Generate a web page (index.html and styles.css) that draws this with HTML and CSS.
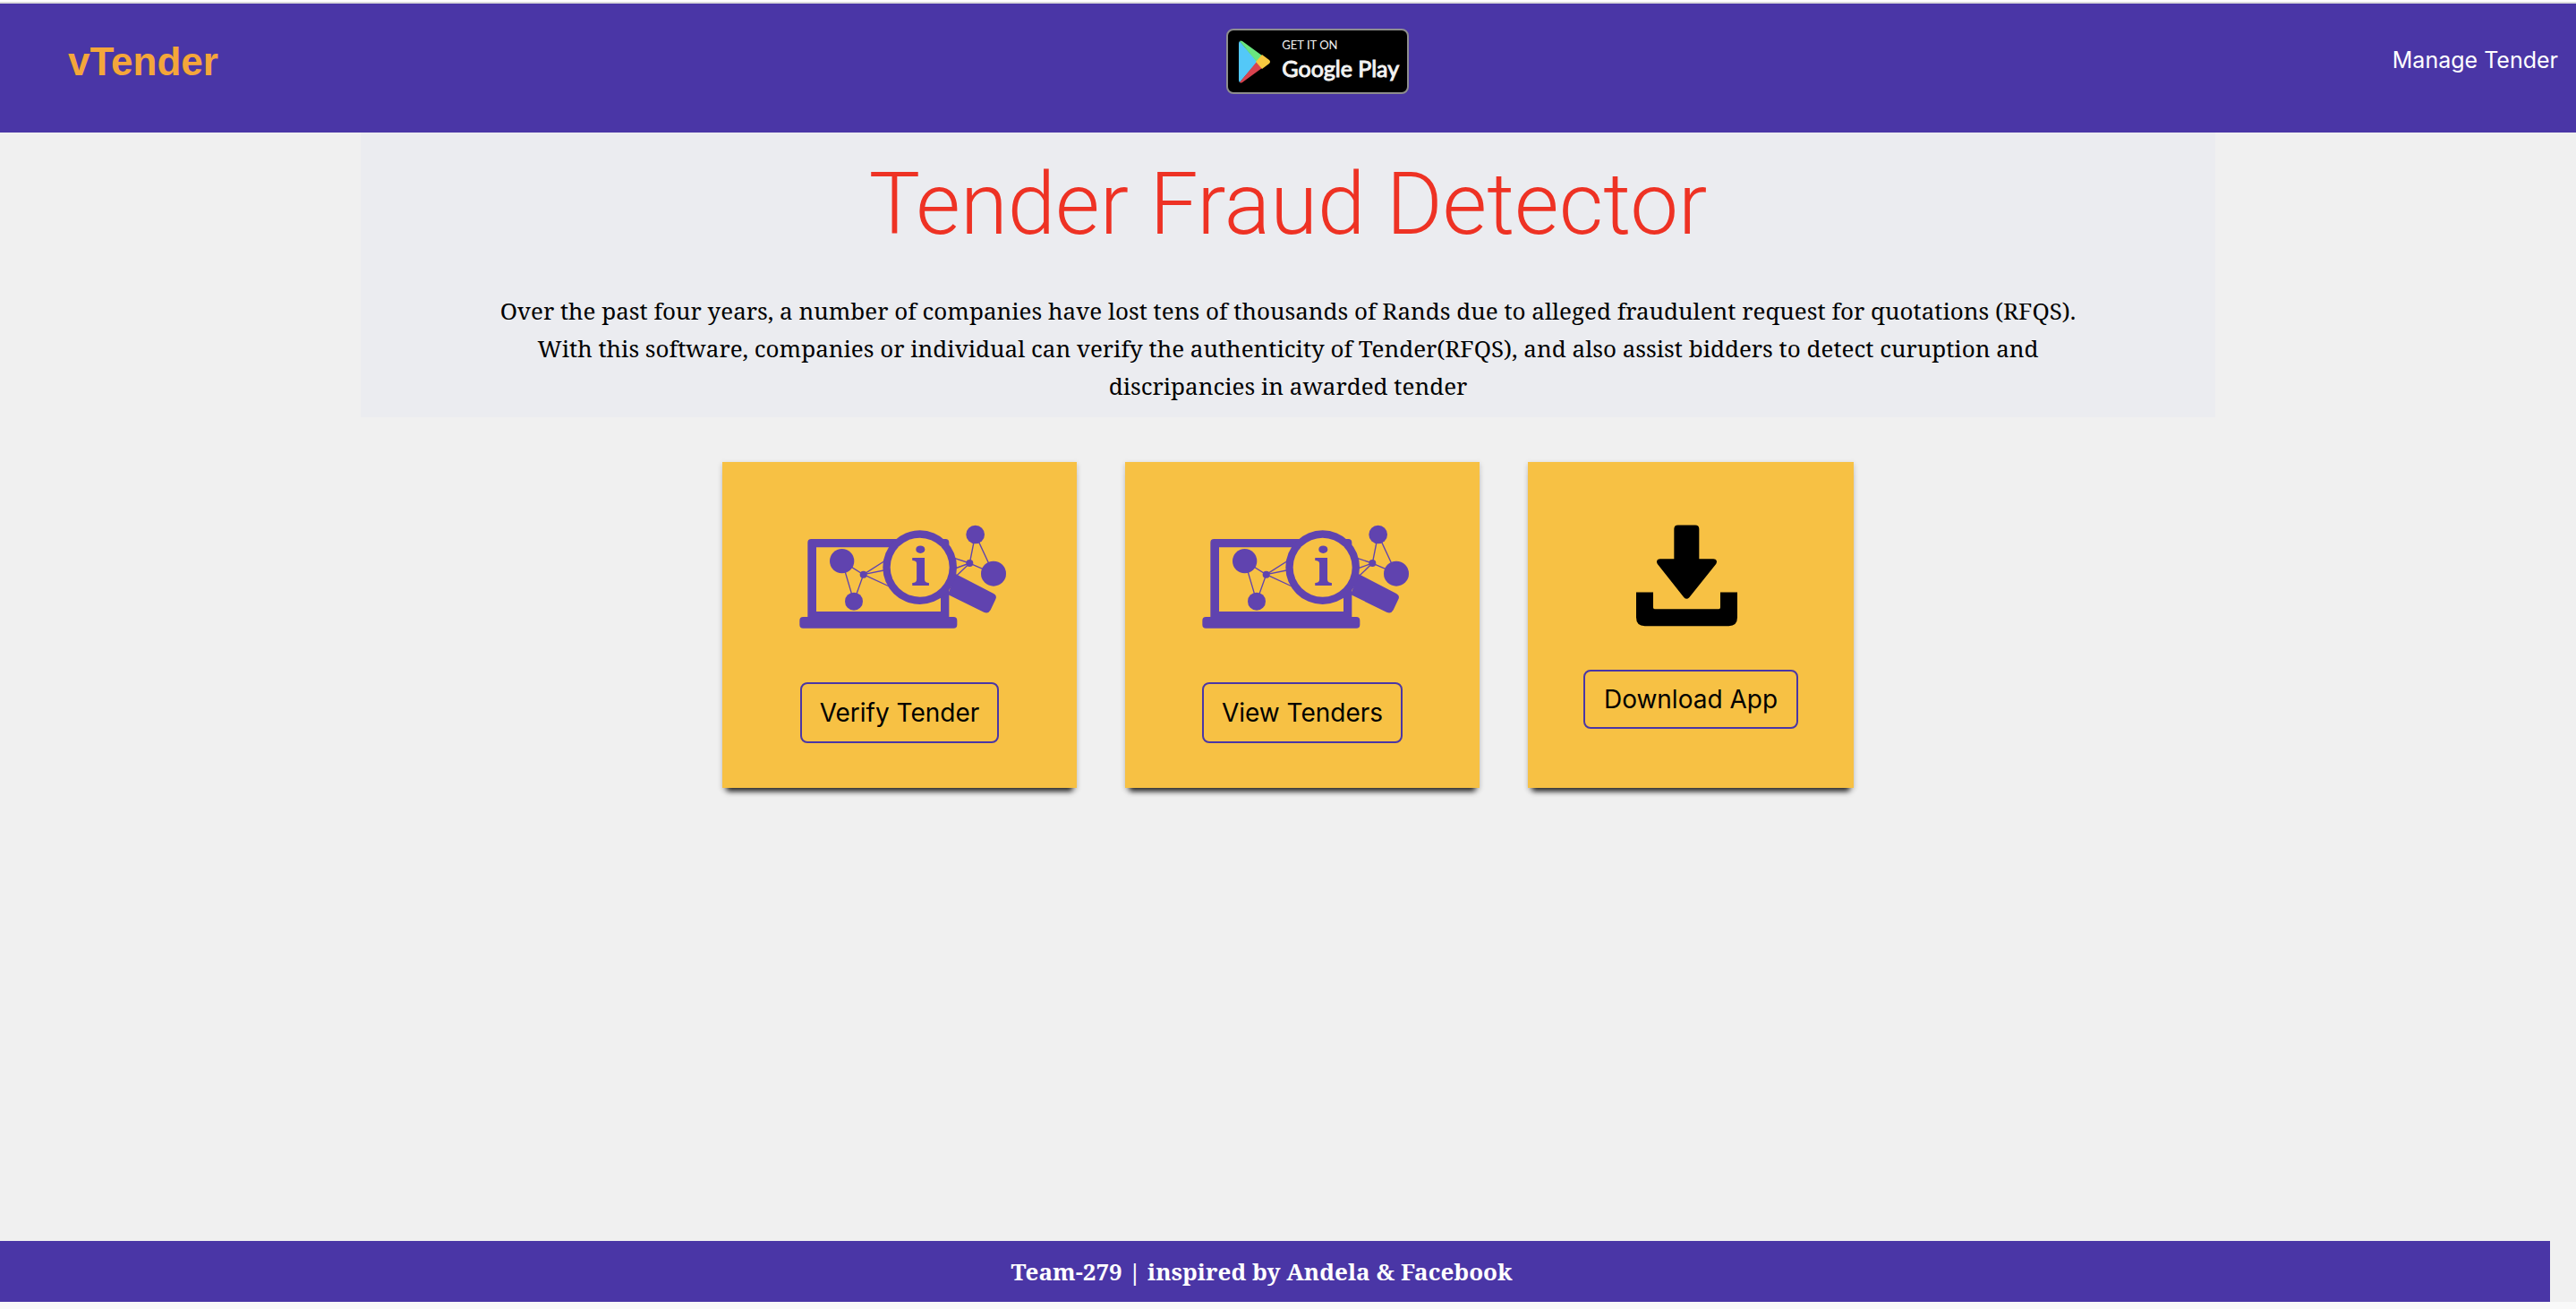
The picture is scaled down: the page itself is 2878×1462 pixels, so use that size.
FILE: index.html
```html
<!DOCTYPE html>
<html lang="en">
<head>
  <meta charset="utf-8">
  <meta name="viewport" content="width=device-width, initial-scale=1">
  <title>vTender</title>
  <link rel="stylesheet" href="styles.css">
</head>
<body>
  <header class="topbar">
    <a class="brand" href="#">vTender</a>
    <a class="play-badge" href="#" aria-label="Get it on Google Play">
      <svg class="play-logo" viewBox="0 0 36 48" aria-hidden="true">
        <path fill="#53c8f8" d="M1 1 21 24 1 47Q0 46 0 44V4Q0 2 1 1Z"/>
        <path fill="#6ae57f" d="M1 1Q2 0 4 1L26 17 20 24Z"/>
        <path fill="#d9434f" d="M1 47Q2 48 4 47L26 31 20 24Z"/>
        <path fill="#f7c840" d="M26 16 34 22Q36 24 34 26L26 32 19 24Z"/>
      </svg>
      <span class="play-text">
        <span class="play-small">GET IT ON</span>
        <span class="play-large">Google Play</span>
      </span>
    </a>
    <a class="nav-link" href="#">Manage Tender</a>
  </header>

  <main>
    <section class="hero">
      <h1>Tender Fraud Detector</h1>
      <p>Over the past four years, a number of companies have lost tens of thousands of Rands due to alleged fraudulent request for quotations (RFQS). With this software, companies or individual can verify the authenticity of Tender(RFQS), and also assist bidders to detect curuption and discripancies in awarded tender</p>
    </section>

    <section class="cards">
      <article class="card">
        <svg class="inspect" viewBox="18 48 720 348" aria-hidden="true">
          <g fill="none" stroke="#6043af" stroke-width="4">
            <path d="M185 170 257 215 225 305ZM257 215 340 162M257 215 340 198M257 215 350 258"/>
            <path d="M613 177 632 81 693 212ZM613 177 555 158M613 177 555 198M613 177 560 228"/>
          </g>
          <g fill="#6043af">
            <path fill-rule="evenodd" d="M70 108q0-12 12-12h450q12 0 12 12v252H70ZM99 124v215h417V124Z"/>
            <rect x="43" y="357" width="528" height="38" rx="12"/>
            <circle cx="185" cy="170" r="41"/>
            <circle cx="257" cy="215" r="12"/>
            <circle cx="225" cy="305" r="30"/>
            <circle cx="632" cy="81" r="31"/>
            <circle cx="613" cy="177" r="12"/>
            <circle cx="693" cy="212" r="42"/>
            <path d="M566 213 692 278q14 7 8 20l-17 36q-7 13-21 8L540 282Z"/>
            <circle cx="446" cy="191" r="124"/>
          </g>
          <circle cx="446" cy="191" r="99" fill="#f7c144"/>
          <text class="icon-letter" x="449" y="252" text-anchor="middle">i</text>
        </svg>
        <button type="button">Verify Tender</button>
      </article>
      <article class="card">
        <svg class="inspect" viewBox="18 48 720 348" aria-hidden="true">
          <g fill="none" stroke="#6043af" stroke-width="4">
            <path d="M185 170 257 215 225 305ZM257 215 340 162M257 215 340 198M257 215 350 258"/>
            <path d="M613 177 632 81 693 212ZM613 177 555 158M613 177 555 198M613 177 560 228"/>
          </g>
          <g fill="#6043af">
            <path fill-rule="evenodd" d="M70 108q0-12 12-12h450q12 0 12 12v252H70ZM99 124v215h417V124Z"/>
            <rect x="43" y="357" width="528" height="38" rx="12"/>
            <circle cx="185" cy="170" r="41"/>
            <circle cx="257" cy="215" r="12"/>
            <circle cx="225" cy="305" r="30"/>
            <circle cx="632" cy="81" r="31"/>
            <circle cx="613" cy="177" r="12"/>
            <circle cx="693" cy="212" r="42"/>
            <path d="M566 213 692 278q14 7 8 20l-17 36q-7 13-21 8L540 282Z"/>
            <circle cx="446" cy="191" r="124"/>
          </g>
          <circle cx="446" cy="191" r="99" fill="#f7c144"/>
          <text class="icon-letter" x="449" y="252" text-anchor="middle">i</text>
        </svg>
        <button type="button">View Tenders</button>
      </article>
      <article class="card card-small">
        <svg class="download" viewBox="416 230 369 339" aria-hidden="true">
          <path d="M556 230h58q13 0 13 13v100h48q16 2 9 17L594 472q-9 9-18 0L487 360q-7-15 9-17h47V243q0-13 13-13Z"/>
          <path d="M416 455h57v51q0 5 5 5h215q5 0 5-5v-51h57v84q0 29-29 29H445q-29 0-29-29Z"/>
        </svg>
        <button type="button">Download App</button>
      </article>
    </section>
  </main>

  <footer>
    <p>Team-279 | inspired by Andela &amp; Facebook</p>
  </footer>
</body>
</html>
```
FILE: styles.css
```css
* {
  box-sizing: border-box;
}

body {
  margin: 0;
  min-height: 100vh;
  display: flex;
  flex-direction: column;
  background: #f0f0f0;
  border-top: 2px solid #fff;
  border-bottom: 8px solid #f9f9f9;
  font-family: Inter, "Liberation Sans", sans-serif;
  color: #000;
}

.icon-letter {
  font: bold 176px "Noto Serif", "DejaVu Serif", serif;
  fill: #6043af;
}

.topbar {
  display: flex;
  justify-content: space-between;
  align-items: flex-start;
  height: 146px;
  padding: 28px 20px 0 76px;
  border-top: 2px solid #dcdcdc;
  background: #4a36a6;
}

.brand {
  margin: 12px 28px 0 0;
  font: bold 44px/50px "Liberation Sans", sans-serif;
  color: #f4a63a;
  text-decoration: none;
}

.play-badge {
  display: flex;
  align-items: center;
  gap: 12px;
  width: 204px;
  height: 73px;
  padding-left: 12px;
  border: 2px solid #8d8d8d;
  border-radius: 8px;
  background: #000;
  color: #f2f2f2;
  text-decoration: none;
  white-space: nowrap;
}

.play-logo {
  width: 36px;
  height: 48px;
}

.play-text {
  display: flex;
  flex-direction: column;
  padding-bottom: 6px;
  font-family: Lato, "Open Sans", sans-serif;
}

.play-small {
  font-size: 13px;
  line-height: 20px;
}

.play-large {
  font-size: 25px;
  line-height: 32px;
  -webkit-text-stroke: 1px #f2f2f2;
}

.nav-link {
  margin-top: 19px;
  font-size: 25px;
  line-height: 32px;
  color: #fff;
  text-decoration: none;
}

.hero {
  width: 72%;
  margin: 0 auto;
  padding: 22px 134px 14px;
  background: #ebecf0;
  text-align: center;
}

.hero h1 {
  margin: 0 0 40px;
  font: 300 96px/116px Roboto, Inter, sans-serif;
  color: #ee3224;
}

.hero p {
  margin: 0;
  font: 26px/42px "Noto Serif", "DejaVu Serif", serif;
}

.cards {
  display: flex;
  flex-wrap: wrap;
  justify-content: center;
  gap: 54px;
  padding: 50px 0;
}

.card {
  display: flex;
  flex-direction: column;
  align-items: center;
  width: 396px;
  min-height: 364px;
  padding: 70px 54px 50px;
  background: #f7c144;
  box-shadow: 0 9px 6px -5px rgba(0, 0, 0, 0.8), 0 2px 6px rgba(0, 0, 0, 0.2);
}

.card-small {
  width: 364px;
}

.inspect {
  width: 240px;
  height: 116px;
  margin-bottom: 60px;
}

.download {
  width: 123px;
  height: 114px;
  margin-bottom: 48px;
}

.card button {
  padding: 15px 20px;
  border: 2px solid #4a36a6;
  border-radius: 8px;
  background: transparent;
  font: 28px/34px Inter, "Liberation Sans", sans-serif;
  color: #000;
  white-space: nowrap;
}

.card-small button {
  padding: 14px 21px;
}

footer {
  width: 99%;
  margin-top: auto;
  padding: 16px 30px 16px 0;
  background: #4a36a6;
  color: #fff;
  text-align: center;
}

footer p {
  margin: 0;
  font: bold 26px/36px "Noto Serif", "DejaVu Serif", serif;
}
```
